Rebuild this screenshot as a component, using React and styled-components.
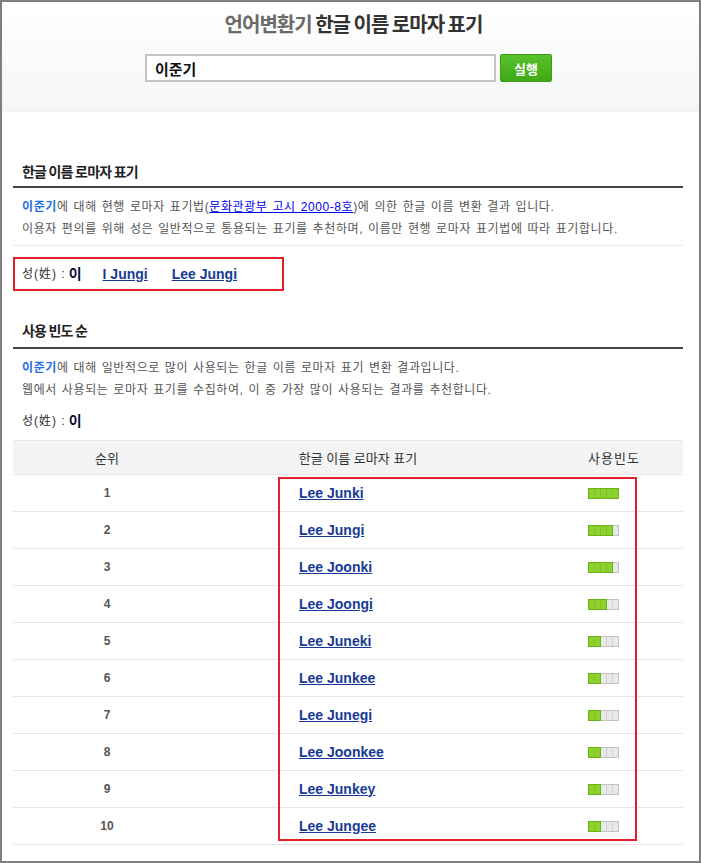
import React from 'react';
import styled, { createGlobalStyle } from 'styled-components';

const GlobalStyle = createGlobalStyle`
  html, body {
    margin: 0;
    padding: 0;
    background: #fff;
  }
  body {
    font-family: "Liberation Sans", "Noto Sans CJK KR", sans-serif;
  }
  * {
    box-sizing: border-box;
  }
`;

const Frame = styled.div`
  width: 701px;
  height: 863px;
  border: 2px solid #7f7f7f;
  overflow: hidden;
  background: #fff;
`;

const Header = styled.div`
  padding: 10px 0 29px;
  background: linear-gradient(#ffffff, #f6f6f6);
  border-bottom: 1px solid #f0f0f0;
  text-align: center;
`;

const Title = styled.h1`
  margin: 0;
  padding-left: 6px;
  font-family: "Noto Sans CJK KR", sans-serif;
  font-size: 20px;
  line-height: 24px;
  font-weight: 700;
  letter-spacing: -1px;
  color: #333;
`;

const TitleBrand = styled.span`
  color: #6a6a6a;
`;

const SearchRow = styled.form`
  display: flex;
  justify-content: center;
  gap: 4px;
  margin-top: 18px;
  padding-right: 4px;
`;

const SearchInput = styled.input`
  width: 351px;
  height: 28px;
  border: 2px solid #c4c4c4;
  padding: 0 8px;
  font-family: "Noto Sans CJK KR", sans-serif;
  font-size: 15px;
  font-weight: 700;
  color: #111;
  outline: none;
`;

const RunButton = styled.button`
  width: 52px;
  height: 28px;
  border: 1px solid #3d9c14;
  border-radius: 2px;
  background: linear-gradient(#58c22b, #3fa816);
  color: #fff;
  font-family: "Noto Sans CJK KR", sans-serif;
  font-size: 13px;
  font-weight: 700;
  padding: 0;
  cursor: pointer;
`;

const Content = styled.div`
  padding: 0 16px 0 11px;
`;

const Section = styled.section`
  margin-top: ${(p) => p.$top}px;
`;

const SectionTitle = styled.h2`
  margin: 0;
  padding: 0 9px ${(p) => p.$pb || 5}px;
  font-family: "Noto Sans CJK KR", sans-serif;
  font-size: 14px;
  line-height: 20px;
  font-weight: 700;
  letter-spacing: -0.8px;
  color: #222;
  border-bottom: 2px solid #444;
`;

const Desc = styled.div`
  margin-top: 8px;
  padding: 0 9px 5px;
  font-size: 12px;
  line-height: 22px;
  color: #555;
  letter-spacing: 0.6px;
  word-spacing: 1px;
  border-bottom: ${(p) => (p.$divider ? '1px solid #ebebeb' : 'none')};
`;

const Strong = styled.b`
  color: #1f6fe5;
`;

const DocLink = styled.a`
  color: #0000ee;
  text-decoration: underline;
`;

const SurnameBox = styled.div`
  display: inline-flex;
  align-items: center;
  margin-top: 11px;
  width: 271px;
  height: 34px;
  padding: 0 7px;
  border: 2px solid #e3202a;
`;

const SurnameLine = styled.div`
  display: flex;
  align-items: center;
  font-size: 12px;
  color: #333;
  letter-spacing: 1px;
  padding: ${(p) => (p.$plain ? '5px 9px 0' : '0')};
  line-height: 20px;
`;

const SurnameValue = styled.b`
  color: #0b0b3b;
  margin-left: 3px;
  font-size: 14px;
`;

const NameLink = styled.a`
  font-family: "Liberation Sans", sans-serif;
  font-size: 14px;
  font-weight: 700;
  letter-spacing: 0;
  color: #173a96;
  text-decoration: underline;
  margin-left: ${(p) => p.$gap || 0}px;
`;

const Table = styled.div`
  position: relative;
  margin-top: 9px;
`;

const Row = styled.div`
  display: grid;
  grid-template-columns: 188px 314px 168px;
  align-items: center;
  height: ${(p) => (p.$head ? 35 : 37)}px;
  border-top: ${(p) => (p.$head ? '1px solid #e6e6e6' : 'none')};
  border-bottom: 1px solid #e6e6e6;
  background: ${(p) => (p.$head ? '#f4f4f4' : '#fff')};
  font-size: 13px;
  color: #333;
`;

const HeadCell = styled.div`
  text-align: center;
  padding-left: ${(p) => p.$pad || 0}px;
  letter-spacing: ${(p) => (p.$pad ? 1 : 0)}px;
`;

const Rank = styled.div`
  text-align: center;
  font-weight: 700;
  font-size: 12px;
  color: #555;
`;

const NameCell = styled.div`
  padding-left: 98px;
  line-height: 16px;
`;

const FreqCell = styled.div`
  padding-left: 73px;
  display: flex;
`;

const Bar = styled.div`
  display: flex;
  width: 31px;
  height: 11px;
`;

const BarPart = styled.div`
  height: 11px;
  background-color: ${(p) => (p.$on ? '#8fd02e' : '#e9e9e9')};
  background-image: repeating-linear-gradient(
    90deg,
    transparent 0 5px,
    ${(p) => (p.$on ? '#7ac520' : '#d4d4d4')} 5px 6px
  );
  border: 1px solid ${(p) => (p.$on ? '#66b51c' : '#c3c3c3')};
  border-left-width: ${(p) => (p.$on ? 1 : 0)}px;
`;

const Highlight = styled.div`
  position: absolute;
  left: 265px;
  top: 37px;
  width: 359px;
  height: 364px;
  border: 2px solid #e3202a;
  pointer-events: none;
`;

const rows = [
  { name: 'Lee Junki', level: 5 },
  { name: 'Lee Jungi', level: 4 },
  { name: 'Lee Joonki', level: 4 },
  { name: 'Lee Joongi', level: 3 },
  { name: 'Lee Juneki', level: 2 },
  { name: 'Lee Junkee', level: 2 },
  { name: 'Lee Junegi', level: 2 },
  { name: 'Lee Joonkee', level: 2 },
  { name: 'Lee Junkey', level: 2 },
  { name: 'Lee Jungee', level: 2 },
];

function FreqBar({ level }) {
  return (
    <Bar>
      {level > 0 && <BarPart $on style={{ width: level * 6 + 1 }} />}
      {level < 5 && <BarPart style={{ flex: 1 }} />}
    </Bar>
  );
}

export default function App() {
  return (
    <>
      <GlobalStyle />
      <Frame>
        <Header>
          <Title>
            <TitleBrand>언어변환기</TitleBrand> 한글 이름 로마자 표기
          </Title>
          <SearchRow onSubmit={(e) => e.preventDefault()}>
            <SearchInput defaultValue="이준기" />
            <RunButton type="submit">실행</RunButton>
          </SearchRow>
        </Header>

        <Content>
          <Section $top={49}>
            <SectionTitle>한글 이름 로마자 표기</SectionTitle>
            <Desc $divider>
              <Strong>이준기</Strong>에 대해 현행 로마자 표기법(
              <DocLink href="#">문화관광부 고시 2000-8호</DocLink>)에 의한 한글 이름 변환 결과 입니다.
              <br />
              이용자 편의를 위해 성은 일반적으로 통용되는 표기를 추천하며, 이름만 현행 로마자 표기법에 따라 표기합니다.
            </Desc>
            <SurnameBox>
              <SurnameLine>
                성(姓) : <SurnameValue>이</SurnameValue>
                <NameLink href="#" $gap={20}>I Jungi</NameLink>
                <NameLink href="#" $gap={24}>Lee Jungi</NameLink>
              </SurnameLine>
            </SurnameBox>
          </Section>

          <Section $top={29}>
            <SectionTitle $pb={7}>사용 빈도 순</SectionTitle>
            <Desc>
              <Strong>이준기</Strong>에 대해 일반적으로 많이 사용되는 한글 이름 로마자 표기 변환 결과입니다.
              <br />
              웹에서 사용되는 로마자 표기를 수집하여, 이 중 가장 많이 사용되는 결과를 추천합니다.
            </Desc>
            <SurnameLine $plain>
              성(姓) : <SurnameValue>이</SurnameValue>
            </SurnameLine>

            <Table>
              <Row $head>
                <HeadCell>순위</HeadCell>
                <HeadCell>한글 이름 로마자 표기</HeadCell>
                <HeadCell $pad={30}>사용빈도</HeadCell>
              </Row>
              {rows.map((r, i) => (
                <Row key={r.name}>
                  <Rank>{i + 1}</Rank>
                  <NameCell>
                    <NameLink href="#">{r.name}</NameLink>
                  </NameCell>
                  <FreqCell>
                    <FreqBar level={r.level} />
                  </FreqCell>
                </Row>
              ))}
              <Highlight />
            </Table>
          </Section>
        </Content>
      </Frame>
    </>
  );
}
